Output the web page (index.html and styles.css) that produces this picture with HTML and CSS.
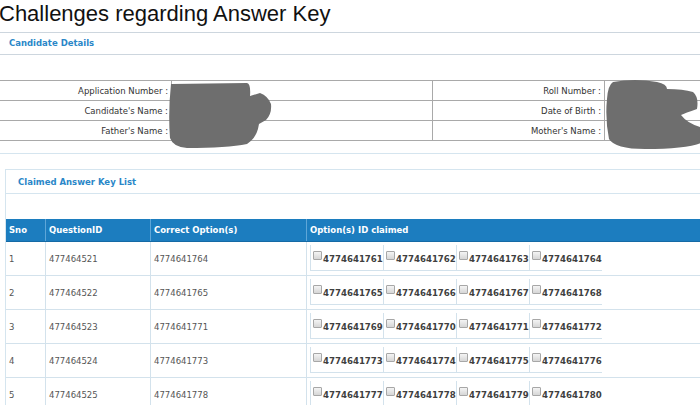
FILE: index.html
```html
<!DOCTYPE html>
<html>
<head>
<meta charset="utf-8">
<link rel="stylesheet" href="styles.css">
</head>
<body>
<h1 class="title">Challenges regarding Answer Key</h1>
<section class="cand">
  <div class="cand-head">Candidate Details</div>
  <table class="cand-table">
    <tr><td class="lbl c1">Application Number :</td><td class="val c2"></td><td class="lbl c3">Roll Number :</td><td class="val"></td></tr>
    <tr><td class="lbl">Candidate's Name :</td><td class="val"></td><td class="lbl">Date of Birth :</td><td class="val"></td></tr>
    <tr><td class="lbl">Father's Name :</td><td class="val"></td><td class="lbl">Mother's Name :</td><td class="val"></td></tr>
  </table>
</section>
<section class="claim">
  <div class="claim-head">Claimed Answer Key List</div>
  <div class="claim-gap"></div>
  <table class="claim-table">
    <thead>
      <tr><th class="k1">Sno</th><th class="k2">QuestionID</th><th class="k3">Correct Option(s)</th><th>Option(s) ID claimed</th></tr>
    </thead>
    <tbody>
      <tr><td>1</td><td>477464521</td><td>4774641764</td><td class="opts"><table class="opt-table"><tr><td><input type="checkbox">4774641761</td><td><input type="checkbox">4774641762</td><td><input type="checkbox">4774641763</td><td><input type="checkbox">4774641764</td></tr></table></td></tr>
      <tr><td>2</td><td>477464522</td><td>4774641765</td><td class="opts"><table class="opt-table"><tr><td><input type="checkbox">4774641765</td><td><input type="checkbox">4774641766</td><td><input type="checkbox">4774641767</td><td><input type="checkbox">4774641768</td></tr></table></td></tr>
      <tr><td>3</td><td>477464523</td><td>4774641771</td><td class="opts"><table class="opt-table"><tr><td><input type="checkbox">4774641769</td><td><input type="checkbox">4774641770</td><td><input type="checkbox">4774641771</td><td><input type="checkbox">4774641772</td></tr></table></td></tr>
      <tr><td>4</td><td>477464524</td><td>4774641773</td><td class="opts"><table class="opt-table"><tr><td><input type="checkbox">4774641773</td><td><input type="checkbox">4774641774</td><td><input type="checkbox">4774641775</td><td><input type="checkbox">4774641776</td></tr></table></td></tr>
      <tr><td>5</td><td>477464525</td><td>4774641778</td><td class="opts"><table class="opt-table"><tr><td><input type="checkbox">4774641777</td><td><input type="checkbox">4774641778</td><td><input type="checkbox">4774641779</td><td><input type="checkbox">4774641780</td></tr></table></td></tr>
    </tbody>
  </table>
</section>
<svg class="redact r1" width="110" height="70" viewBox="0 0 110 70"><path d="M4 2 L80 1 Q84 2 83 14 L93 11 Q101 14 104 22 Q105 32 99 38 L92 42 Q90 56 80 62 Q60 66 20 66 Q6 65 3 56 Q1 30 4 2 Z" fill="#6e6e6e"/></svg>
<svg class="redact r2" width="96" height="72" viewBox="0 0 96 72"><path d="M8 3 Q30 -1 52 3 Q62 5 62 10 Q78 10 88 13 Q94 18 92 30 Q80 34 76 36 Q82 44 95 48 L96 64 Q80 70 40 70 Q10 70 4 60 Q0 40 2 20 Q3 6 8 3 Z" fill="#6e6e6e"/></svg>
</body>
</html>
```
FILE: styles.css
```css
html, body {
  margin: 0;
  padding: 0;
  background: #fff;
}
body {
  position: relative;
  width: 700px;
  height: 405px;
  overflow: hidden;
  font-family: "DejaVu Sans", Verdana, sans-serif;
  font-size: 8.5px;
  color: #555;
}
.title {
  margin: 0;
  height: 32px;
  margin-left: -1px;
  font-family: "Liberation Sans", Arial, sans-serif;
  font-weight: normal;
  font-size: 22px;
  line-height: 27px;
  color: #111;
}
.cand {
  border-top: 1px solid #cdd6de;
  border-bottom: 1px solid #d5e5ef;
  padding-bottom: 12px;
}
.cand-head {
  height: 21px;
  line-height: 21px;
  padding-left: 9px;
  font-weight: bold;
  color: #2a87c8;
  border-bottom: 1px solid #cdd6de;
  margin-bottom: 25px;
}
.cand-table {
  width: 710px;
  border-collapse: collapse;
  color: #333;
}
.cand-table td {
  height: 19px;
  padding: 0;
  border-top: 1px solid #a9a9a9;
  border-bottom: 1px solid #a9a9a9;
}
.cand-table td.val {
  border-left: 1px solid #a9a9a9;
}
.cand-table td.lbl {
  text-align: right;
  padding-right: 3px;
}
.cand-table .c1 { width: 168px; }
.cand-table .c2 { width: 260px; }
.cand-table .c3 { width: 168px; }
.cand-table td.lbl + td.val + td.lbl { border-left: 1px solid #a9a9a9; }
.claim {
  margin: 15px 0 0 5px;
  border-top: 1px solid #d5e5ef;
  border-left: 1px solid #d5e5ef;
}
.claim-head {
  height: 23px;
  line-height: 24px;
  padding-left: 12px;
  font-weight: bold;
  color: #2a87c8;
  border-bottom: 1px solid #d5e5ef;
}
.claim-gap {
  height: 25px;
}
.claim-table {
  width: 700px;
  border-collapse: collapse;
}
.claim-table > thead > tr > th {
  background: #1c7dbf;
  color: #fff;
  font-weight: bold;
  text-align: left;
  height: 22px;
  padding: 0 3px;
  border-left: 1px solid #5ea6d8;
  border-bottom: 1px solid #156aa5;
}
.claim-table > thead > tr > th:first-child { border-left: none; }
.claim-table .k1 { width: 33px; }
.claim-table .k2 { width: 98px; }
.claim-table .k3 { width: 149px; }
.claim-table > tbody > tr {
  height: 34px;
}
.claim-table > tbody > tr > td {
  padding: 0 3px;
  border-left: 1px solid #d3e2ec;
  border-bottom: 1px solid #d3e2ec;
  text-align: left;
}
.claim-table > tbody > tr > td:first-child { border-left: none; }
.claim-table > tbody > tr > td.opts {
  padding: 2px 3px 4px 3px;
}
.opt-table {
  border-collapse: collapse;
  border-bottom: 1px solid #d3e2ec;
  font-weight: bold;
  color: #3f3f3f;
  font-size: 8.6px;
}
.opt-table td {
  width: 70px;
  height: 25px;
  padding: 0 0 0 2px;
  border-left: 1px solid #d3e2ec;
  white-space: nowrap;
}
.opt-table input {
  appearance: none;
  -webkit-appearance: none;
  width: 9px;
  height: 9px;
  margin: 0 1px 0 0;
  border: 1px solid #a7a7a7;
  border-radius: 1px;
  background: linear-gradient(#f4f4f4, #d6d6d6);
  vertical-align: 2px;
}
.redact {
  position: absolute;
  filter: blur(0.6px);
}
.r1 { left: 167px; top: 82px; }
.r2 { left: 605px; top: 79px; }
```
